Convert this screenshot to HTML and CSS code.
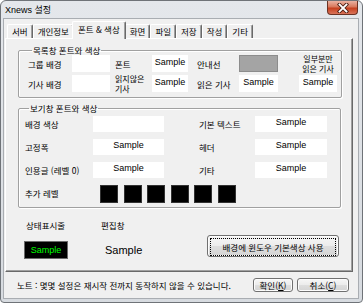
FILE: index.html
```html
<!DOCTYPE html>
<html lang="ko">
<head>
    <meta charset="UTF-8">
    <title>Xnews 설정</title>
    <link rel="stylesheet" href="styles.css">
</head>
<body>

    <div class="window">
        <div class="titlebar">
            <span class="title">Xnews 설정</span>
            <div class="close">
                <svg width="12" height="10" viewBox="0 0 12 10">
                    <path d="M2.5 1.5 L9.5 8.5 M9.5 1.5 L2.5 8.5" stroke="#4a1e14" stroke-width="3.6" stroke-linecap="square"/>
                    <path d="M2.5 1.5 L9.5 8.5 M9.5 1.5 L2.5 8.5" stroke="#fff" stroke-width="1.8" stroke-linecap="square"/>
                </svg>
            </div>
        </div>

        <div class="client">
            <div class="tabs">
                <div class="tab">서버</div>
                <div class="tab">개인정보</div>
                <div class="tab active">폰트 &amp; 색상</div>
                <div class="tab">화면</div>
                <div class="tab">파일</div>
                <div class="tab">저장</div>
                <div class="tab">작성</div>
                <div class="tab">기타</div>
            </div>

            <div class="panel">
                <fieldset class="group list-group">
                    <legend>목록창 폰트와 색상</legend>
                    <div class="list-grid">
                        <span class="lbl">그룹 배경</span>
                        <div class="swatch"></div>
                        <span class="lbl pad">폰트</span>
                        <div class="swatch">Sample</div>
                        <span class="lbl pad-wide">안내선</span>
                        <div class="swatch gray"></div>
                        <span></span>
                        <span class="lbl two-line center">일부분만<br>읽은 기사</span>

                        <span class="lbl">기사 배경</span>
                        <div class="swatch"></div>
                        <span class="lbl pad two-line">읽지않은<br>기사</span>
                        <div class="swatch">Sample</div>
                        <span class="lbl pad-wide">읽은 기사</span>
                        <div class="swatch">Sample</div>
                        <span></span>
                        <div class="swatch">Sample</div>
                    </div>
                </fieldset>

                <fieldset class="group view-group">
                    <legend>보기창 폰트와 색상</legend>
                    <div class="view-grid">
                        <span class="lbl">배경 색상</span>
                        <div class="swatch"></div>
                        <span></span>
                        <span class="lbl">기본 텍스트</span>
                        <div class="swatch">Sample</div>

                        <span class="lbl">고정폭</span>
                        <div class="swatch">Sample</div>
                        <span></span>
                        <span class="lbl">헤더</span>
                        <div class="swatch">Sample</div>

                        <span class="lbl">인용글 (레벨 0)</span>
                        <div class="swatch">Sample</div>
                        <span></span>
                        <span class="lbl">기타</span>
                        <div class="swatch">Sample</div>

                        <span class="lbl">추가 레벨</span>
                        <div class="levels">
                            <div class="level"></div>
                            <div class="level"></div>
                            <div class="level"></div>
                            <div class="level"></div>
                            <div class="level"></div>
                            <div class="level"></div>
                        </div>
                    </div>
                </fieldset>

                <div class="misc">
                    <div class="misc-grid">
                        <span class="lbl status-lbl">상태표시줄</span>
                        <span class="lbl">편집창</span>
                        <div class="status-sample">Sample</div>
                        <span class="editor-sample">Sample</span>
                    </div>
                    <button class="btn default-colors"><span class="focus">배경에 윈도우 기본색상 사용</span></button>
                </div>
            </div>

            <div class="footer">
                <span class="note">노트 : 몇몇 설정은 재시작 전까지 동작하지 않을 수 있습니다.</span>
                <button class="btn ok">확인(<u>K</u>)</button>
                <button class="btn cancel">취소(<u>C</u>)</button>
            </div>
        </div>
    </div>

</body>
</html>
```

FILE: styles.css
```css
body {
    margin: 0;
    background: #fff;
    color: #000;
    font-family: "Noto Sans CJK KR", sans-serif;
    font-size: 8.5px;
}
.window {
    width: 363px;
    height: 303px;
    box-sizing: border-box;
    border: 1px solid #6f7378;
    border-radius: 6px 6px 4px 4px;
    background: linear-gradient(#e4e7eb, #d7dbe0);
    padding: 0 3px 3px 2px;
    display: flex;
    flex-direction: column;
}
.titlebar {
    height: 17px;
    display: flex;
    justify-content: space-between;
    align-items: flex-start;
}
.title {
    font-family: "Liberation Sans", "Noto Sans CJK KR", sans-serif;
    font-size: 9px;
    line-height: 11px;
    padding: 4px 0 0 2px;
}
.close {
    width: 29px;
    height: 13px;
    margin-right: 1px;
    border: 1px solid #6b3224;
    border-top: none;
    border-radius: 0 0 4px 4px;
    background: linear-gradient(#eab2a2, #d8785c 45%, #c6401f 55%, #d9745a);
    display: flex;
    align-items: center;
    justify-content: center;
}
.client {
    flex: 1;
    background: #f0f0f0;
    border: 1px solid #a9adb2;
    padding: 2px 5px 0 1px;
    display: flex;
    flex-direction: column;
}

/* tabs */
.tabs {
    height: 17px;
    display: flex;
    align-items: flex-end;
    padding-left: 2px;
}
.tab {
    height: 13px;
    line-height: 13px;
    padding: 0 4px;
    border-top: 1px solid #fff;
    border-left: 1px solid #fff;
    border-right: 1px solid #696969;
    box-shadow: inset -1px 0 #a0a0a0;
    border-radius: 2px 2px 0 0;
}
.tab.active {
    height: 17px;
    line-height: 15px;
    margin: 0 -1px -1px -2px;
    padding: 0 5px;
    background: #f0f0f0;
    position: relative;
    z-index: 1;
}
.panel {
    height: 234px;
    box-sizing: border-box;
    border-top: 1px solid #fff;
    border-left: 1px solid #fff;
    border-right: 1px solid #696969;
    border-bottom: 1px solid #696969;
    box-shadow: inset -1px -1px #a0a0a0;
    padding: 6px 0 0 12px;
}

/* group boxes */
.group {
    margin: 0;
    min-width: 0;
    box-sizing: border-box;
    border: 1px solid #a0a0a0;
    box-shadow: inset 1px 1px #fff, 1px 1px #fff;
    border-radius: 2px;
}
.group legend {
    line-height: 10px;
    padding: 0 1px;
    margin-left: 4px;
}
.lbl {
    line-height: 10px;
    white-space: nowrap;
    align-self: center;
}
.list-group {
    width: 324px;
    padding: 0 0 5px 9px;
}
.list-grid {
    display: grid;
    grid-template-columns: 44px 38px 42px 36px 51px 39px 21px 38px;
    grid-template-rows: 17px 17px;
    row-gap: 3px;
}
.pad { padding-left: 5px; }
.pad-wide { padding-left: 9px; }
.two-line {
    line-height: 10px;
    font-size: 8px;
}
.center { text-align: center; }
.swatch {
    background: #fff;
    font-family: "Liberation Sans", sans-serif;
    font-size: 9px;
    line-height: 10px;
    padding-top: 2px;
    text-align: center;
    white-space: nowrap;
}
.swatch.gray {
    background: #a4a4a4;
    border: 1px solid #8c8c8c;
}
.view-group {
    width: 323px;
    margin-top: 5px;
    padding: 3px 0 6px 6px;
}
.view-grid {
    display: grid;
    grid-template-columns: 68px 71px 35px 56px 72px;
    grid-auto-rows: 16px;
    row-gap: 7px;
}
.view-grid .swatch { padding-top: 1px; }
.levels {
    grid-column: 2 / 6;
    height: 18px;
    display: flex;
    gap: 5.5px;
    padding-left: 7px;
}
.level {
    width: 18px;
    height: 18px;
    box-sizing: border-box;
    background: #000;
    border: 1px solid #333;
}

/* bottom of the panel */
.misc {
    display: flex;
    align-items: flex-start;
    padding: 12px 13px 0 6px;
}
.misc-grid {
    display: grid;
    grid-template-columns: 77px 80px;
    grid-template-rows: 10px 18px;
    row-gap: 11px;
}
.status-lbl { padding-left: 2px; }
.status-sample {
    width: 44px;
    box-sizing: border-box;
    background: #000;
    border: 1px solid #6a6a6a;
    color: #00ff00;
    font-family: "Liberation Sans", sans-serif;
    font-size: 9px;
    line-height: 16px;
    text-align: center;
}
.editor-sample {
    align-self: center;
    padding-left: 4px;
    font-family: "Liberation Sans", sans-serif;
    font-size: 11px;
}
.btn {
    font-family: "Noto Sans CJK KR", sans-serif;
    font-size: 8.5px;
    color: #000;
    border: 1px solid #707070;
    border-radius: 3px;
    background: linear-gradient(#f6f6f6, #ececec 48%, #dedede 52%, #d4d4d4);
    box-shadow: inset 0 0 0 1px #fcfcfc;
    padding: 0;
    margin: 0;
}
.default-colors {
    width: 132px;
    height: 22px;
    margin: 15px 0 0 auto;
    padding: 2px;
}
.default-colors .focus {
    display: block;
    height: 16px;
    line-height: 16px;
    border: 1px dotted #000;
}

/* footer */
.footer {
    flex: 1;
    display: flex;
    align-items: flex-start;
    padding: 6px 4px 0 12px;
}
.note {
    line-height: 10px;
    margin-top: 2px;
    flex: 1;
    white-space: nowrap;
}
.ok {
    width: 40px;
    height: 14px;
    margin-right: 4px;
}
.cancel {
    width: 52px;
    height: 14px;
}
```
